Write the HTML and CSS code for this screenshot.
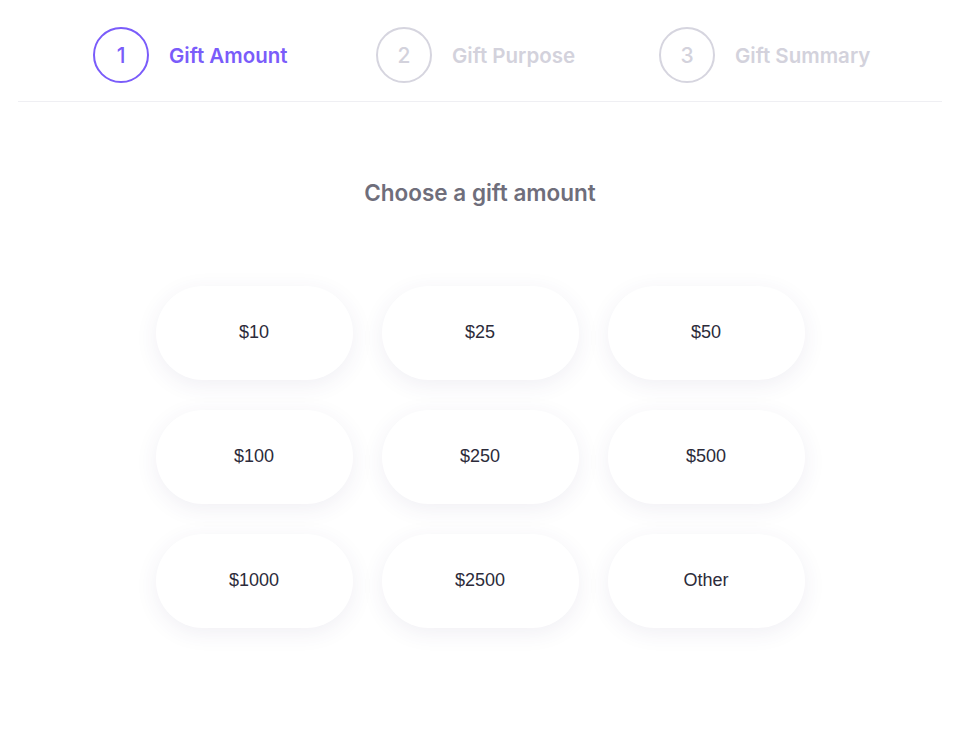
FILE: index.html
```html
<!DOCTYPE html>
<html>
<head>
<meta charset="utf-8">
<link rel="stylesheet" href="styles.css">
</head>
<body>
<header class="steps">
  <div class="step active"><span class="num">1</span><span class="label">Gift Amount</span></div>
  <div class="step"><span class="num">2</span><span class="label">Gift Purpose</span></div>
  <div class="step"><span class="num">3</span><span class="label">Gift Summary</span></div>
</header>
<main class="content">
  <h1 class="title">Choose a gift amount</h1>
  <div class="grid">
    <button class="amt">$10</button>
    <button class="amt">$25</button>
    <button class="amt">$50</button>
    <button class="amt">$100</button>
    <button class="amt">$250</button>
    <button class="amt">$500</button>
    <button class="amt">$1000</button>
    <button class="amt">$2500</button>
    <button class="amt">Other</button>
  </div>
</main>
</body>
</html>
```
FILE: styles.css
```css
html, body { margin: 0; padding: 0; background: #fff; }
body { font-family: "Inter", "Liberation Sans", sans-serif; min-height: 729px; }
.steps {
  display: flex;
  margin: 0 18px;
  padding: 27px 0 18px 75px;
  border-bottom: 1px solid #efeff3;
}
.step {
  width: 284px;
  display: flex;
  align-items: center;
  gap: 20px;
  color: #d3d2dc;
}
.num {
  width: 52px;
  height: 52px;
  border: 2px solid #d6d5df;
  border-radius: 50%;
  display: flex;
  align-items: center;
  justify-content: center;
  font-size: 21px;
  font-weight: 500;
}
.label { font-size: 20.5px; font-weight: 600; letter-spacing: 0; }
.step.active { color: #7a5cfa; }
.step.active .num { border-color: #7a5cfa; }
.content {
  display: flex;
  flex-direction: column;
  align-items: center;
  padding-bottom: 60px;
}
.title {
  margin: 76px 0 0;
  font-size: 22.5px;
  line-height: 30px;
  font-weight: 600;
  color: #6f6e7b;
  letter-spacing: 0;
}
.grid {
  margin-top: 78px;
  display: grid;
  grid-template-columns: repeat(3, 197px);
  column-gap: 29px;
  row-gap: 30px;
}
.amt {
  height: 94px;
  border: none;
  border-radius: 47px;
  background: #fff;
  box-shadow: 0 5px 22px rgba(60, 55, 110, 0.08);
  font-family: "Liberation Sans", Arial, sans-serif;
  font-size: 18px;
  line-height: 20px;
  color: #2c2b3a;
  padding: 0 0 2px;
}
```
